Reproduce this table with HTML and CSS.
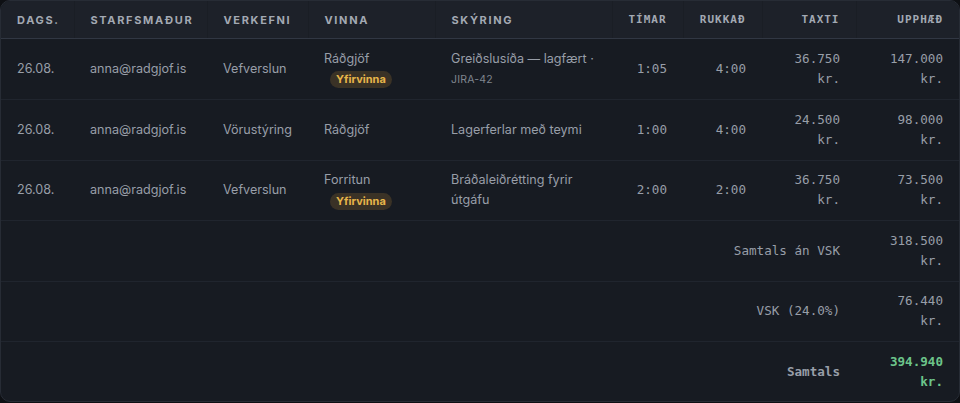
FILE: index.html
```html
<!DOCTYPE html>
<html lang="is">
<head>
<meta charset="utf-8">
<title>Tímaskráning</title>
<link rel="stylesheet" href="styles.css">
</head>
<body>
<div class="card">
  <table class="sheet">
    <colgroup>
      <col class="c-date"><col class="c-emp"><col class="c-proj"><col class="c-work"><col class="c-desc">
      <col class="c-hrs"><col class="c-bill"><col class="c-rate"><col class="c-amt">
    </colgroup>
    <thead>
      <tr>
        <th>Dags.</th>
        <th>Starfsmaður</th>
        <th>Verkefni</th>
        <th>Vinna</th>
        <th>Skýring</th>
        <th class="num">Tímar</th>
        <th class="num">Rukkað</th>
        <th class="num">Taxti</th>
        <th class="num">Upphæð</th>
      </tr>
    </thead>
    <tbody>
      <tr>
        <td>26.08.</td>
        <td>anna@radgjof.is</td>
        <td>Vefverslun</td>
        <td>Ráðgjöf <span class="badge">Yfirvinna</span></td>
        <td>Greiðslusíða — lagfært · <span class="ref">JIRA-42</span></td>
        <td class="num">1:05</td>
        <td class="num">4:00</td>
        <td class="num">36.750 kr.</td>
        <td class="num">147.000 kr.</td>
      </tr>
      <tr>
        <td>26.08.</td>
        <td>anna@radgjof.is</td>
        <td>Vörustýring</td>
        <td>Ráðgjöf</td>
        <td>Lagerferlar með teymi</td>
        <td class="num">1:00</td>
        <td class="num">4:00</td>
        <td class="num">24.500 kr.</td>
        <td class="num">98.000 kr.</td>
      </tr>
      <tr>
        <td>26.08.</td>
        <td>anna@radgjof.is</td>
        <td>Vefverslun</td>
        <td>Forritun <span class="badge">Yfirvinna</span></td>
        <td>Bráðaleiðrétting fyrir útgáfu</td>
        <td class="num">2:00</td>
        <td class="num">2:00</td>
        <td class="num">36.750 kr.</td>
        <td class="num">73.500 kr.</td>
      </tr>
    </tbody>
    <tfoot>
      <tr>
        <td colspan="8" class="num">Samtals án VSK</td>
        <td class="num">318.500 kr.</td>
      </tr>
      <tr>
        <td colspan="8" class="num">VSK (24.0%)</td>
        <td class="num">76.440 kr.</td>
      </tr>
      <tr class="total">
        <td colspan="8" class="num">Samtals</td>
        <td class="num green">394.940 kr.</td>
      </tr>
    </tfoot>
  </table>
</div>
</body>
</html>
```

FILE: styles.css
```css
html, body {
  margin: 0;
  padding: 0;
  background: #0e1014;
}

.card {
  width: 960px;
  box-sizing: border-box;
  border: 1px solid #272c35;
  border-radius: 10px;
  overflow: hidden;
  background: #171b22;
}

.sheet {
  width: 958px;
  table-layout: fixed;
  border-collapse: collapse;
  font-family: Inter, "Noto Sans", sans-serif;
  font-size: 12.6px;
  color: #989ea8;
}

.c-date { width: 73px; }
.c-emp { width: 133px; }
.c-proj { width: 101px; }
.c-work { width: 127px; }
.c-desc { width: 177px; }
.c-hrs { width: 71px; }
.c-bill { width: 79px; }
.c-rate { width: 94px; }
.c-amt { width: 103px; }

.sheet th {
  background: #1d2129;
  border-bottom: 1px solid #313743;
  border-left: 1px solid #1a1e25;
  padding: 12px 16px 11px;
  line-height: 14px;
  font-size: 11px;
  font-weight: 700;
  letter-spacing: 0.15em;
  text-transform: uppercase;
  text-align: left;
  color: #a3a9b3;
}

.sheet th:first-child { border-left: none; }

.sheet th.num {
  text-align: right;
  font-family: "DejaVu Sans Mono", monospace;
  letter-spacing: 0.09em;
}

.sheet td {
  padding: 9.7px 16px;
  line-height: 20px;
  vertical-align: middle;
  border-bottom: 1px solid #20252e;
}

.sheet td.num {
  text-align: right;
  font-family: "DejaVu Sans Mono", monospace;
  font-size: 12.6px;
}

.sheet tfoot tr.total td {
  border-top: 1px solid #2a2f38;
  border-bottom: none;
  font-weight: 700;
}

.green { color: #6cc48a; }

.badge {
  display: inline-block;
  vertical-align: middle;
  margin-left: 6px;
  padding: 0 6px;
  border-radius: 9px;
  background: #3a3226;
  color: #e6b54a;
  font-size: 11px;
  font-weight: 700;
  line-height: 17px;
}

.ref {
  font-size: 10.5px;
  color: #7f858f;
  letter-spacing: 0.02em;
}
```
